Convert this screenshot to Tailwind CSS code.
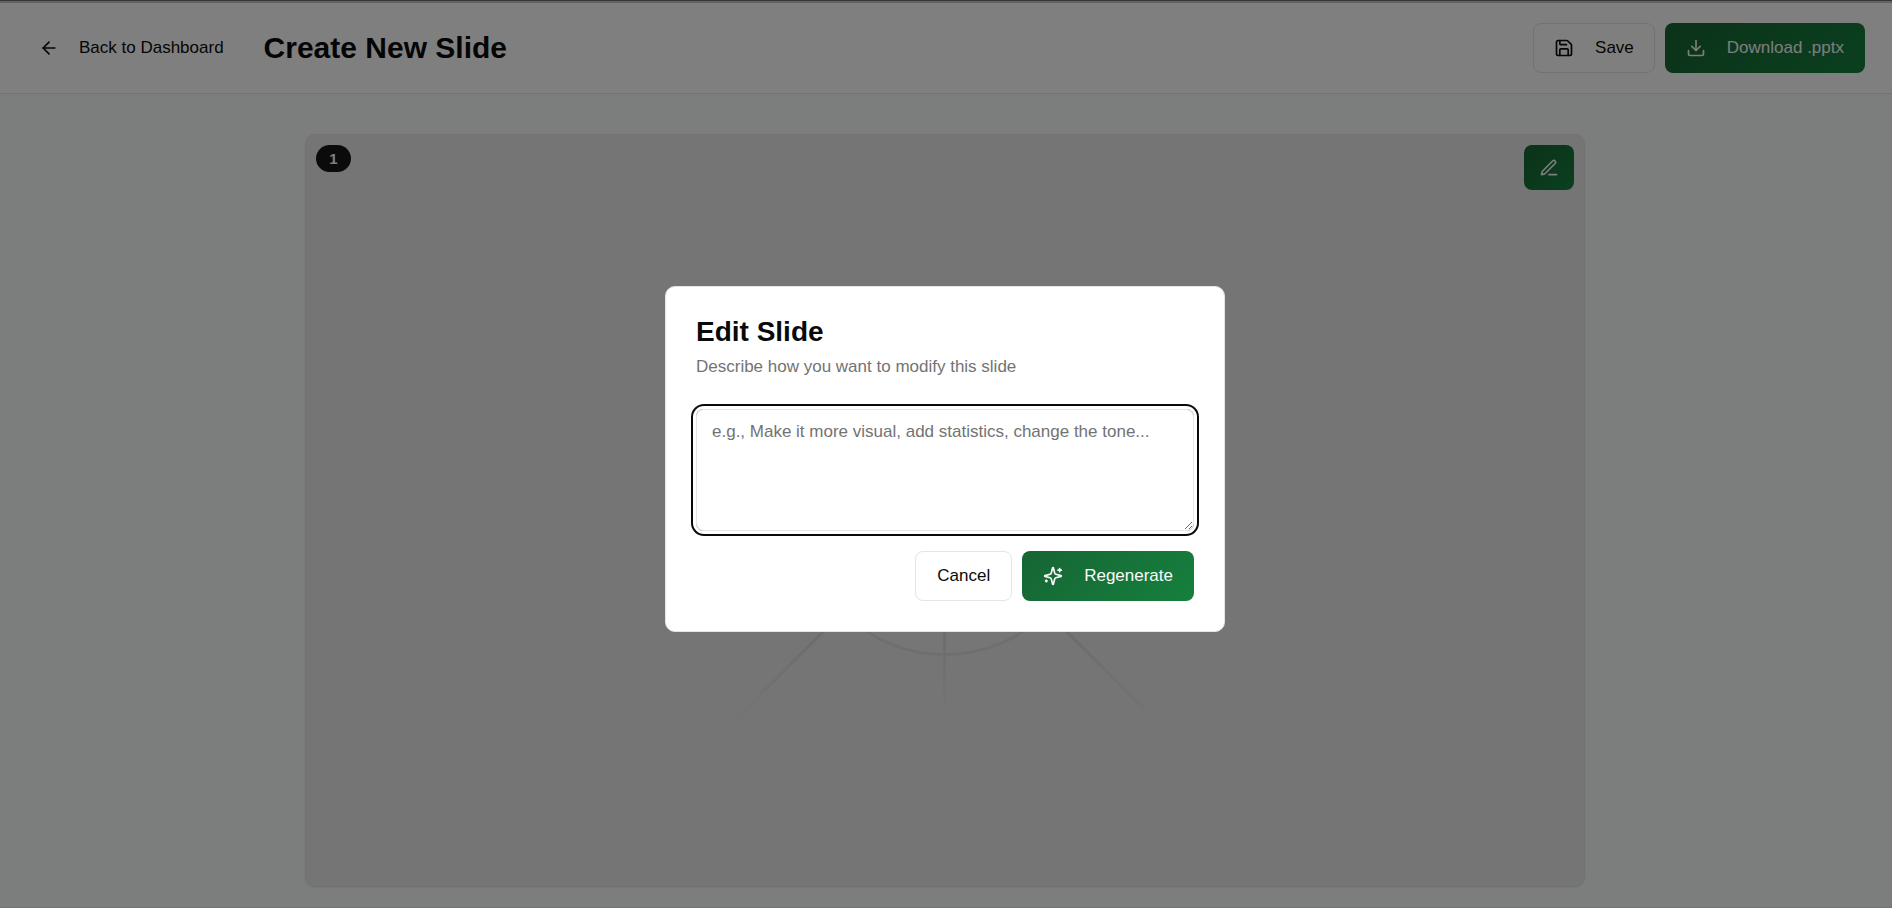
<!DOCTYPE html>
<html lang="en">
<head>
<meta charset="utf-8">
<meta name="viewport" content="width=device-width, initial-scale=1">
<title>Create New Slide</title>
<script src="https://cdn.jsdelivr.net/npm/@tailwindcss/browser@4"></script>
</head>
<body class="min-h-screen bg-[#f6fcf8] font-['Liberation_Sans',Arial,sans-serif] text-[17px] leading-6 text-neutral-950">
  <div class="flex min-h-screen flex-col border-b border-[#e9e6e6]">
    <header class="border-b border-neutral-200 bg-white">
      <div class="h-px bg-[#6c6c6c]"></div>
      <div class="h-0.5 bg-[#c4c4c4]"></div>
      <div class="flex items-center justify-between px-[27px] py-5">
        <div class="flex items-center gap-6">
          <button type="button" class="flex h-[45px] items-center gap-5 px-3">
            <svg class="size-5" viewBox="0 0 24 24" fill="none" stroke="currentColor" stroke-width="2" stroke-linecap="round" stroke-linejoin="round" aria-hidden="true"><path d="m12 19-7-7 7-7"/><path d="M19 12H5"/></svg>
            Back to Dashboard
          </button>
          <h1 class="pl-1 text-[30px] leading-9 font-bold">Create New Slide</h1>
        </div>
        <div class="flex items-center gap-2.5">
          <button type="button" class="flex h-[50px] items-center gap-[21px] rounded-lg border border-neutral-200 px-5">
            <svg class="size-5" viewBox="0 0 24 24" fill="none" stroke="currentColor" stroke-width="2" stroke-linecap="round" stroke-linejoin="round" aria-hidden="true"><path d="M15.2 3a2 2 0 0 1 1.4.6l3.8 3.8a2 2 0 0 1 .6 1.4V19a2 2 0 0 1-2 2H5a2 2 0 0 1-2-2V5a2 2 0 0 1 2-2z"/><path d="M17 21v-7a1 1 0 0 0-1-1H8a1 1 0 0 0-1 1v7"/><path d="M7 3v4a1 1 0 0 0 1 1h7"/></svg>
            Save
          </button>
          <button type="button" class="flex h-[50px] items-center gap-[21px] rounded-lg bg-linear-135 from-[#166534] to-[#15803d] px-[21px] text-neutral-50">
            <svg class="size-5" viewBox="0 0 24 24" fill="none" stroke="currentColor" stroke-width="2" stroke-linecap="round" stroke-linejoin="round" aria-hidden="true"><path d="M21 15v4a2 2 0 0 1-2 2H5a2 2 0 0 1-2-2v-4"/><path d="m7 10 5 5 5-5"/><path d="M12 15V3"/></svg>
            Download .pptx
          </button>
        </div>
      </div>
    </header>
    <main class="grow pt-10 pr-[42px] pb-5 pl-10">
      <section aria-label="Slide 1" class="relative mx-auto aspect-[17/10] w-full max-w-[1280px] overflow-hidden rounded-[10px] border border-[#e5e5e5] bg-[#eaeaea] shadow-xs">
        <svg class="size-full" viewBox="0 0 1280 753" fill="none" aria-hidden="true">
          <defs>
            <radialGradient id="fade" gradientUnits="userSpaceOnUse" cx="640" cy="376" r="305">
              <stop offset="0.5" stop-color="#d6d6d6"/><stop offset="1" stop-color="#eaeaea"/>
            </radialGradient>
            <linearGradient id="drop" gradientUnits="userSpaceOnUse" x1="0" y1="480" x2="0" y2="584">
              <stop stop-color="#d6d6d6"/><stop offset="1" stop-color="#eaeaea"/>
            </linearGradient>
          </defs>
          <circle cx="640" cy="376" r="145" fill="#ededed" stroke="#dfdfdf" stroke-width="3"/>
          <path d="M640 376 425 591M640 376l215 215" stroke="url(#fade)" stroke-width="3"/>
          <path d="M638 376h3v208h-3z" fill="url(#drop)"/>
        </svg>
        <span class="absolute top-2.5 left-2.5 flex h-[27px] w-[35px] items-center justify-center rounded-full bg-neutral-900 text-[15px] font-bold text-neutral-50">1</span>
        <button type="button" aria-label="Edit slide" class="absolute top-2.5 right-2.5 flex h-[45px] w-[50px] items-center justify-center rounded-lg bg-linear-135 from-[#166534] to-[#15803d] text-neutral-50">
          <svg class="size-5" viewBox="0 0 24 24" fill="none" stroke="currentColor" stroke-width="2" stroke-linecap="round" stroke-linejoin="round" aria-hidden="true"><path d="M12 20h9"/><path d="M16.376 3.622a1 1 0 0 1 3.002 3.002L7.368 18.635a2 2 0 0 1-.855.506l-2.872.838a.5.5 0 0 1-.62-.62l.838-2.872a2 2 0 0 1 .506-.854z"/></svg>
        </button>
      </section>
    </main>
  </div>

  <div class="fixed inset-0 flex items-center justify-center bg-black/50 pt-5 pr-[22px] pb-2.5 pl-5">
    <div role="dialog" aria-modal="true" aria-labelledby="dialog-title" class="w-full max-w-[560px] rounded-[10px] border border-neutral-200 bg-white p-[30px]">
      <h2 id="dialog-title" class="text-[28px] leading-[30px] font-bold">Edit Slide</h2>
      <p class="mt-2 text-neutral-500"><label for="prompt">Describe how you want to modify this slide</label></p>
      <textarea id="prompt" class="mt-[30px] block h-[122px] w-full resize-y rounded-lg border border-neutral-200 px-[15px] py-2.5 ring-2 ring-neutral-950 ring-offset-3 outline-none placeholder:text-neutral-500" placeholder="e.g., Make it more visual, add statistics, change the tone..."></textarea>
      <div class="mt-5 flex justify-end gap-2.5">
        <button type="button" class="h-[50px] rounded-lg border border-neutral-200 px-[21px]">Cancel</button>
        <button type="button" class="flex h-[50px] items-center gap-[21px] rounded-lg bg-linear-135 from-[#166534] to-[#15803d] px-[21px] text-neutral-50">
          <svg class="size-5" viewBox="0 0 24 24" fill="none" stroke="currentColor" stroke-width="2" stroke-linecap="round" stroke-linejoin="round" aria-hidden="true"><path d="M9.937 15.5A2 2 0 0 0 8.5 14.063l-6.135-1.582a.5.5 0 0 1 0-.962L8.5 9.936A2 2 0 0 0 9.937 8.5l1.582-6.135a.5.5 0 0 1 .963 0L14.063 8.5A2 2 0 0 0 15.5 9.937l6.135 1.581a.5.5 0 0 1 0 .964L15.5 14.063a2 2 0 0 0-1.437 1.437l-1.582 6.135a.5.5 0 0 1-.963 0z"/><path d="M20 3v4"/><path d="M22 5h-4"/><path d="M4 17v2"/><path d="M5 18H3"/></svg>
          Regenerate
        </button>
      </div>
    </div>
  </div>
</body>
</html>
